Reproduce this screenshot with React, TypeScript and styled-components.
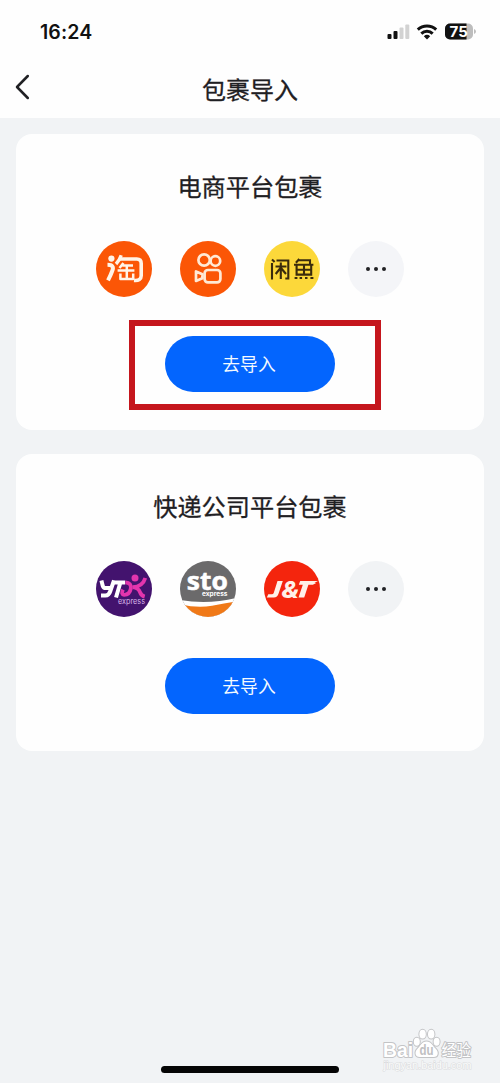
import React from 'react';
import styled, { createGlobalStyle } from 'styled-components';

const sans = '"Inter", "Noto Sans CJK SC", sans-serif';

const GlobalStyle = createGlobalStyle`
  * { box-sizing: border-box; }
  body { margin: 0; background: #f1f3f5; font-family: "Noto Sans CJK SC", sans-serif; color: #1f2023; }
`;

const Screen = styled.div`
  position: relative;
  width: 500px;
  height: 1083px;
  display: flex;
  flex-direction: column;
  overflow: hidden;
  background: #f1f3f5;
`;

const Header = styled.header`
  height: 118px;
  flex: none;
  background: #fefefe;
`;

const StatusBar = styled.div`
  height: 62px;
  display: flex;
  justify-content: space-between;
  align-items: center;
  padding: 2px 24px 0 40px;
`;

const Clock = styled.span`
  font: 600 19.5px/24px ${sans};
  padding-bottom: 1px;
  letter-spacing: 0.1px;
  color: #111;
`;

const StatusIcons = styled.svg`
  width: 90px;
  height: 24px;
  display: block;
`;

const NavBar = styled.div`
  height: 54px;
  display: grid;
  grid-template-columns: 60px 1fr 60px;
  align-items: center;
`;

const BackButton = styled.button`
  border: 0;
  background: none;
  padding: 0 0 4px 14px;
  display: flex;
`;

const Title = styled.h1`
  margin: 0;
  text-align: center;
  font-size: 24px;
  line-height: 36px;
  font-weight: 400;
  -webkit-text-stroke: 0.3px #1f2023;
`;

const Content = styled.main`
  flex: 1;
  display: flex;
  flex-direction: column;
  gap: 24px;
  padding: 16px;
`;

const Card = styled.section`
  height: 296.4px;
  border-radius: 16px;
  background: #fefefe;
  display: flex;
  flex-direction: column;
  align-items: center;
  padding-top: 34px;
`;

const CardTitle = styled.h2`
  margin: 0;
  font-size: 24.2px;
  line-height: 36px;
  font-weight: 400;
  -webkit-text-stroke: 0.3px #1f2023;
`;

const Logos = styled.div`
  display: flex;
  gap: 28px;
  margin-top: 37px;
`;

const Logo = styled.svg`
  width: 56px;
  height: 56px;
  display: block;
`;

const ButtonFrame = styled.div<{ $marked?: boolean }>`
  width: 252px;
  height: 90px;
  margin: ${(p) => (p.$marked ? '23px' : '24.6px')} 0 0 10px;
  padding: 10px 0 0 30px;
  border: 6px solid ${(p) => (p.$marked ? '#c5161d' : 'transparent')};
`;

const ImportButton = styled.button`
  width: 170px;
  height: 56px;
  padding: 0 2px 2px 0;
  border: 0;
  border-radius: 28px;
  background: #0365fe;
  color: #f4faff;
  font: 400 17.8px/26px "Noto Sans CJK SC", sans-serif;
  display: flex;
  align-items: center;
  justify-content: center;
`;

const HomeIndicator = styled.div`
  position: absolute;
  left: 161px;
  bottom: 10px;
  width: 178px;
  height: 7px;
  border-radius: 4px;
  background: #050505;
`;

const Watermark = styled.svg`
  position: absolute;
  left: 378px;
  top: 1022px;
  width: 112px;
  height: 52px;
`;

const StatusGlyphs = () => (
  <StatusIcons viewBox="386 20 90 24">
    <rect x="387.5" y="34" width="4" height="5" rx="1" fill="#111" />
    <rect x="393.5" y="31" width="4" height="8" rx="1" fill="#111" />
    <rect x="399.5" y="27.5" width="4" height="11.5" rx="1" fill="#d2d2d2" />
    <rect x="405.3" y="24.5" width="4" height="14.5" rx="1" fill="#d2d2d2" />
    <g fill="none" stroke="#111" strokeWidth="3">
      <path d="M417.8 29.6a13.4 13.4 0 0 1 18.4 0" />
      <path d="M421.3 33.6a8.4 8.4 0 0 1 11.4 0" />
    </g>
    <path d="M423.8 36.3a4.8 4.8 0 0 1 6.4 0L427 39.6z" fill="#111" />
    <clipPath id="battery"><rect x="445" y="23.5" width="28" height="16" rx="5" /></clipPath>
    <g clipPath="url(#battery)">
      <rect x="445" y="23" width="28" height="17" fill="#bdbdbd" />
      <rect x="445" y="23" width="21.5" height="17" fill="#111" />
    </g>
    <path d="M474 29q2 .6 2 2.5t-2 2.5z" fill="#bdbdbd" />
    <text x="458.7" y="37" textAnchor="middle" fontFamily="Inter, sans-serif" fontWeight="700" fontSize="15" fill="#fff">75</text>
  </StatusIcons>
);

const TaobaoLogo = () => (
  <Logo viewBox="0 0 56 56">
    <circle cx="28" cy="28" r="28" fill="#fb5606" />
    <g fill="none" stroke="#fff4e8" strokeLinejoin="round">
      <circle cx="15.4" cy="17.6" r="3.1" fill="#fff4e8" stroke="none" />
      <path d="M11.5 23.8q7.4 0 4.7 6.2-1.6 4.4-4.2 9.4" strokeWidth="4" />
      <path d="M25.2 14.3q-1.7 5-5.2 8.7" strokeWidth="3.4" />
      <path d="M24 18h16.8q4.4 0 4.4 4.4v12.4q0 5.2-7.2 4.6" strokeWidth="3.6" />
      <path d="M27.4 22l-3.9 5M26.4 24.6h10.6M21.6 29.6h16.8M30.8 25v12.8M24.4 32.6v5.4h12.8v-5.4" strokeWidth="2.5" />
    </g>
  </Logo>
);

const KuaishouLogo = () => (
  <Logo viewBox="0 0 56 56">
    <circle cx="28" cy="28" r="28" fill="#fb5606" />
    <g fill="none" stroke="#ffe9d5" strokeWidth="2.7" strokeLinejoin="round">
      <circle cx="24.1" cy="19" r="5.7" />
      <circle cx="35.4" cy="20" r="4.8" />
      <rect x="24.6" y="29" width="15.8" height="12.4" rx="3.3" />
      <path d="M22.4 33.2l-6.4-2.8v9.6l6.4-2.8z" />
    </g>
  </Logo>
);

const XianyuLogo = () => (
  <Logo viewBox="0 0 56 56">
    <circle cx="28" cy="28" r="28" fill="#fcd83a" />
    <g fill="none" stroke="#3a2b0c" strokeWidth="2.1">
      <path d="M8 22v16.5M8 18.5l2.6 2.5M12.5 19.5h11.8v18h-3M11.5 25.5h11M16.8 21.5v16.5M16.5 27l-4.8 6M17 27l5 6" />
      <path d="M35.3 18l-3.4 3.7M34.8 19.3h11.2v4M30 23.8h19.4M32.6 23.8v9.8h14.6v-9.8M32.6 28.7h14.6M40 23.8v9.8" />
      <path d="M30.6 37h2.8M35.6 37h2.5M41 37h2.5M46.4 37h3" />
    </g>
  </Logo>
);

const MoreLogo = ({ fill }: { fill: string }) => (
  <Logo viewBox="0 0 56 56">
    <circle cx="28" cy="28" r="28" fill={fill} />
    <g fill="#202124">
      <circle cx="20" cy="28" r="2" />
      <circle cx="28" cy="28" r="2" />
      <circle cx="36" cy="28" r="2" />
    </g>
  </Logo>
);

const YtoLogo = () => (
  <Logo viewBox="0 0 56 56">
    <circle cx="28" cy="28" r="28" fill="#43136e" />
    <g fill="none" stroke="#fff" strokeWidth="4">
      <path d="M5.4 19.5l1.4 5.4q.6 2.2 3 2.2h4.4M18 19.5l-3.6 10.4q-1.4 4.6-5 4.6H5" />
      <path d="M17.2 21.5h12M24.4 21.5L20 36.5" />
    </g>
    <g fill="none" stroke="#e335ad" strokeWidth="3.8">
      <path d="M29.4 21.3q6.4.6 5.4 6.3-1.2 6.2-6.6 6.2-3.6-.4-1.2-5.2" />
      <path d="M49.3 17q-2.6 8.6-12.4 9.2 6 1 7.2 5.2 1 3.2 4.6 4.2" />
    </g>
    <circle cx="39" cy="17" r="3.5" fill="#e335ad" />
    <text x="22" y="42.5" textLength="27" lengthAdjust="spacingAndGlyphs" fontFamily="Inter, sans-serif" fontSize="7.5" fill="#d9b5e8">express</text>
  </Logo>
);

const StoLogo = () => (
  <Logo viewBox="0 0 56 56">
    <clipPath id="sto-disc"><circle cx="28" cy="28" r="28" /></clipPath>
    <g clipPath="url(#sto-disc)">
      <rect width="56" height="56" fill="#6b6a6b" />
      <path d="M0 39q28 5 56-2v19H0z" fill="#fff" />
      <path d="M0 43.2q18 4.4 32 1.5 12-2.5 24-4.2V56H0z" fill="#f07918" />
    </g>
    <text x="6.8" y="28.8" textLength="41" lengthAdjust="spacingAndGlyphs" fontFamily="Open Sans, sans-serif" fontWeight="700" fontSize="24.5" fill="#fff" stroke="#fff" strokeWidth="0.5">sto</text>
    <text x="22" y="35" textLength="25.5" lengthAdjust="spacingAndGlyphs" fontFamily="Inter, sans-serif" fontWeight="700" fontSize="6.2" fill="#fff">express</text>
  </Logo>
);

const JtLogo = () => (
  <Logo viewBox="0 0 56 56">
    <circle cx="28" cy="28" r="28" fill="#f4250d" />
    <g fill="#fff0e8">
      <path d="M13.5 20h5.3l-4.2 12.5q-1.2 4-4.7 4H2.8l1.5-3.2h3.5q1.5 0 2-1.5z" />
      <path d="M36.2 20H54l-3.5 1.8 1.7.2-3.3 1.7h-4.5l-4.2 12.8h-5.7l4.3-12.8h-4z" />
    </g>
    <text x="17.5" y="36.5" textLength="17.5" lengthAdjust="spacingAndGlyphs" fontFamily="Inter, sans-serif" fontStyle="italic" fontWeight="800" fontSize="22.5" fill="#fff0e8">&amp;</text>
  </Logo>
);

const BaiduWatermark = () => (
  <Watermark viewBox="378 1022 112 52">
    <g fill="#fff" stroke="#c3c4c6" strokeWidth="2" paintOrder="stroke" strokeLinejoin="round">
      <text x="383" y="1056.5" textLength="30" lengthAdjust="spacingAndGlyphs" fontFamily="Liberation Sans, sans-serif" fontWeight="700" fontSize="20">Bai</text>
      <ellipse cx="416.8" cy="1041.7" rx="3" ry="4" />
      <ellipse cx="422.6" cy="1034.2" rx="3.2" ry="4.4" />
      <ellipse cx="431.2" cy="1034.2" rx="3.2" ry="4.4" />
      <ellipse cx="436.6" cy="1041.7" rx="3" ry="4" />
      <path d="M426.5 1041.5c-5 0-5.5 4.2-9 7.2-3.2 3-2.5 8.3 2.2 8.3h14c4.8 0 5.2-5.3 2-8.3-3.5-3-4.2-7.2-9.2-7.2z" />
      <text x="441.5" y="1055.5" textLength="29.5" lengthAdjust="spacingAndGlyphs" fontFamily="Noto Sans CJK SC, sans-serif" fontWeight="400" fontSize="15.5">经验</text>
    </g>
    <text x="419.5" y="1055" textLength="14" lengthAdjust="spacingAndGlyphs" fontFamily="Liberation Sans, sans-serif" fontWeight="700" fontSize="14" fill="#bfc0c2">du</text>
    <text x="383.5" y="1068.5" textLength="88" lengthAdjust="spacingAndGlyphs" fontFamily="Liberation Sans, sans-serif" fontSize="10.5" fill="#fbfbfb" stroke="#dadbdd" strokeWidth="1" paintOrder="stroke">jingyan.baidu.com</text>
  </Watermark>
);

export default function App() {
  return (
    <Screen>
      <GlobalStyle />
      <Header>
        <StatusBar>
          <Clock>16:24</Clock>
          <StatusGlyphs />
        </StatusBar>
        <NavBar>
          <BackButton aria-label="返回">
            <svg width="17" height="26" viewBox="0 0 17 26" fill="none" stroke="#202124" strokeWidth="2.5" strokeLinecap="round" strokeLinejoin="round">
              <path d="M13.8 2L3 13l10.8 11" />
            </svg>
          </BackButton>
          <Title>包裹导入</Title>
        </NavBar>
      </Header>
      <Content>
        <Card>
          <CardTitle>电商平台包裹</CardTitle>
          <Logos>
            <TaobaoLogo />
            <KuaishouLogo />
            <XianyuLogo />
            <MoreLogo fill="#f4f5f8" />
          </Logos>
          <ButtonFrame $marked>
            <ImportButton>去导入</ImportButton>
          </ButtonFrame>
        </Card>
        <Card>
          <CardTitle>快递公司平台包裹</CardTitle>
          <Logos>
            <YtoLogo />
            <StoLogo />
            <JtLogo />
            <MoreLogo fill="#f1f3f5" />
          </Logos>
          <ButtonFrame>
            <ImportButton>去导入</ImportButton>
          </ButtonFrame>
        </Card>
      </Content>
      <HomeIndicator />
      <BaiduWatermark />
    </Screen>
  );
}
